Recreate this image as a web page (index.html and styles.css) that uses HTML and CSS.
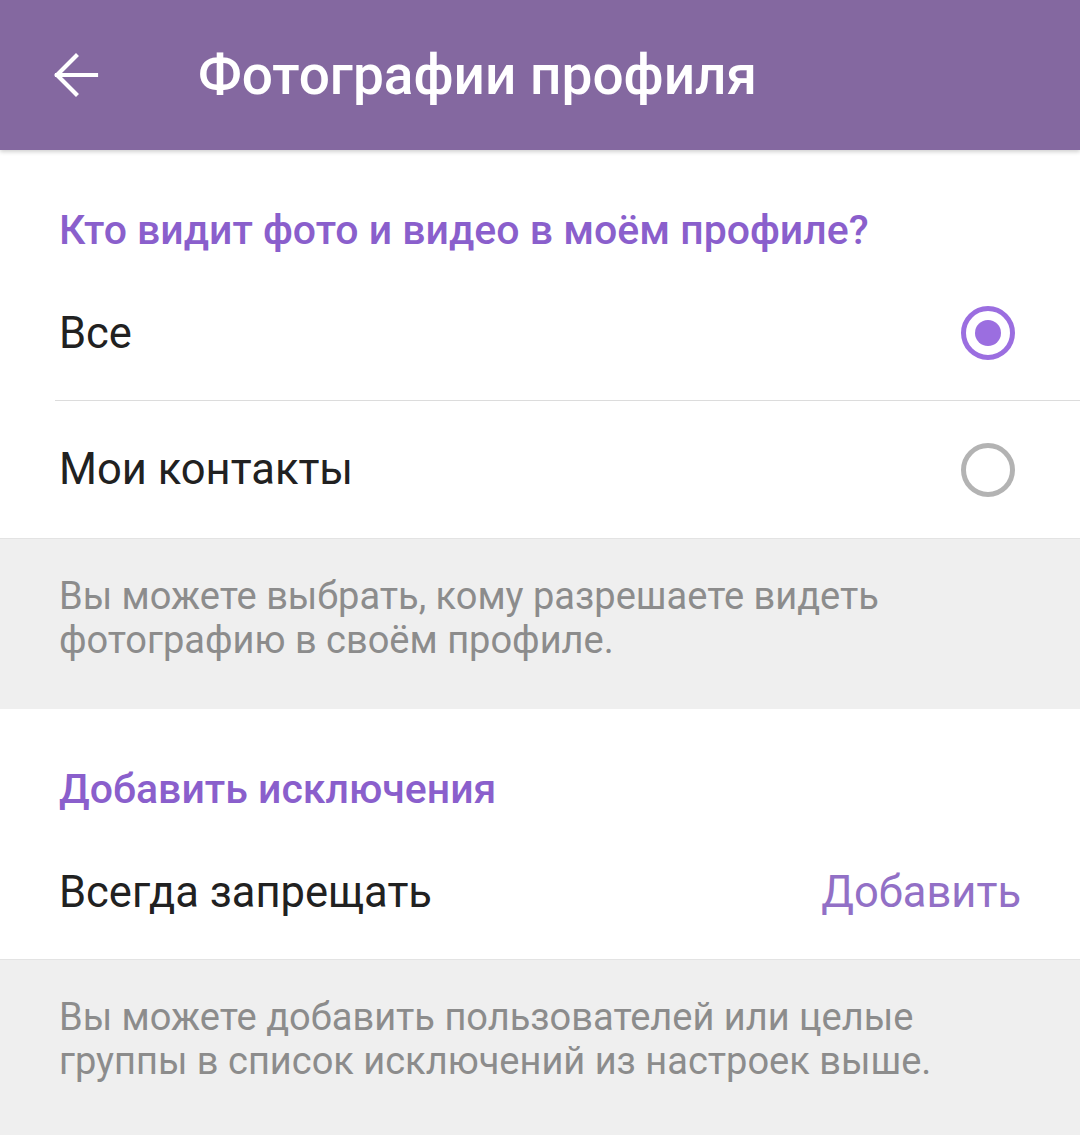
FILE: index.html
```html
<!DOCTYPE html>
<html lang="ru">
<head>
    <meta charset="UTF-8">
    <meta name="viewport" content="width=device-width, initial-scale=1.0">
    <title>Фотографии профиля</title>
    <link rel="stylesheet" href="styles.css">
</head>
<body>

<div class="toolbar">
    <button class="back" aria-label="Назад">
        <svg width="48" height="48" viewBox="0 0 48 48">
            <path d="M45 24H6M25 5L6 24l19 19" fill="none" stroke="#fff" stroke-width="4.2" stroke-linecap="square"/>
        </svg>
    </button>
    <h1>Фотографии профиля</h1>
</div>

<div class="section">
    <h2 class="section-title">Кто видит фото и видео в моём профиле?</h2>
    <div class="row divided">
        <span class="label">Все</span>
        <span class="radio checked"></span>
    </div>
    <div class="row">
        <span class="label">Мои контакты</span>
        <span class="radio"></span>
    </div>
</div>
<div class="hint">
    Вы можете выбрать, кому разрешаете видеть фотографию в своём профиле.
</div>

<div class="section">
    <h2 class="section-title">Добавить исключения</h2>
    <div class="row exceptions">
        <span class="label">Всегда запрещать</span>
        <span class="action">Добавить</span>
    </div>
</div>
<div class="hint last">
    Вы можете добавить пользователей или целые группы в список исключений из настроек выше.
</div>

</body>
</html>
```

FILE: styles.css
```css
body { margin: 0; font-family: Roboto, "Noto Sans", sans-serif; background-color: #efefef; color: #212121; }
.toolbar {
    height: 150px;
    background-color: #8468a0;
    display: flex;
    align-items: center;
    box-shadow: 0 2px 4px rgba(0, 0, 0, 0.18);
    position: relative;
}
.back { background: none; border: none; padding: 0; margin: 0 0 0 51px; width: 48px; height: 48px; display: flex; }
.toolbar h1 { margin: 0 0 0 99px; color: #fff; font-size: 55px; font-weight: 500; }
.section { background-color: #fff; }
.section-title { margin: 0; padding: 58px 0 14px 59px; font-size: 41px; font-weight: 500; color: #8a5fcc; line-height: 44px; }
.row { display: flex; align-items: center; justify-content: space-between; height: 137px; margin-left: 59px; padding-right: 65px; }
.row.divided { height: 134px; border-bottom: 1px solid #dcdcdc; margin-left: 55px; padding-left: 4px; }
.label { font-size: 43.5px; }
.radio { width: 44px; height: 44px; border: 5px solid #b3b3b3; border-radius: 50%; position: relative; }
.radio.checked { border-color: #9b6ee0; }
.radio.checked::after {
    content: "";
    position: absolute;
    left: 50%; top: 50%;
    width: 26px; height: 26px;
    margin: -13px 0 0 -13px;
    border-radius: 50%;
    background-color: #9b6ee0;
}
.row.exceptions { height: 134px; padding-right: 59px; }
.action { font-size: 43.5px; color: #9270c6; }
.hint {
    border-top: 1px solid #e3e3e3;
    padding: 35px 59px 0;
    height: 135px;
    font-size: 38px;
    line-height: 44px;
    color: #8c8c8c;
}
.hint.last { height: 140px; }
```
